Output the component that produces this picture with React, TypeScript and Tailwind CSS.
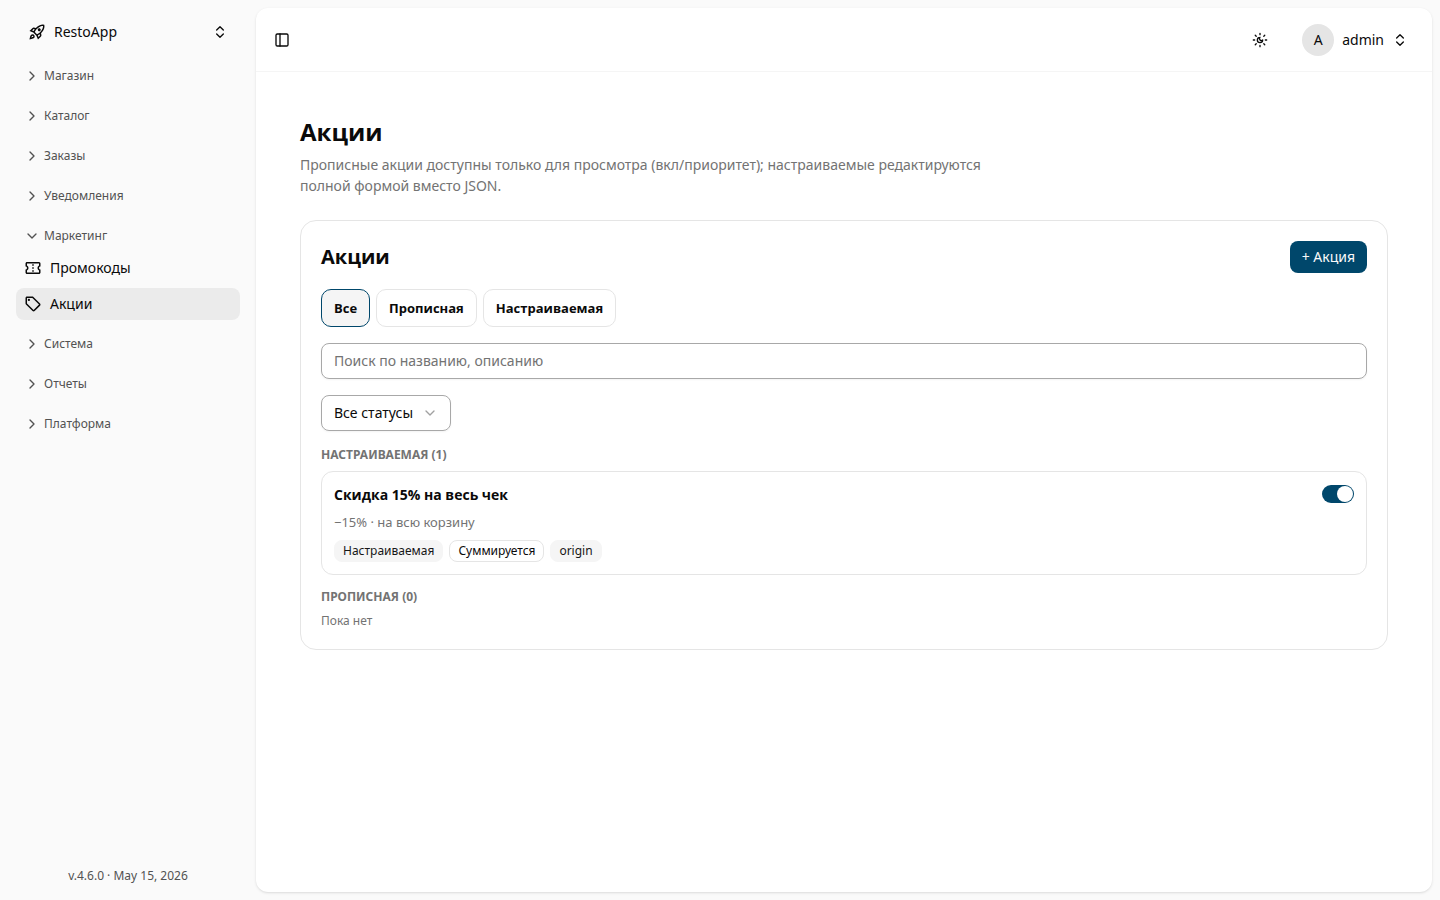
import { useState } from "react";
import { ChevronDown, ChevronRight, ChevronsUpDown, PanelLeft } from "lucide-react";
import type { IconType } from "react-icons";
import { MdOutlineConfirmationNumber, MdOutlineRocketLaunch, MdOutlineSell } from "react-icons/md";

type NavItem = { title: string; icon: IconType };
type NavGroup = { title: string; items?: NavItem[] };

const NAV_GROUPS: NavGroup[] = [
  { title: "Магазин" },
  { title: "Каталог" },
  { title: "Заказы" },
  { title: "Уведомления" },
  {
    title: "Маркетинг",
    items: [
      { title: "Промокоды", icon: MdOutlineConfirmationNumber },
      { title: "Акции", icon: MdOutlineSell },
    ],
  },
  { title: "Система" },
  { title: "Отчеты" },
  { title: "Платформа" },
];

const FILTERS = ["Все", "Прописная", "Настраиваемая"];

export default function App() {
  return (
    <div className="flex min-h-screen bg-[#fafafa] font-['Noto_Sans',sans-serif] text-sm text-neutral-950">
      <Sidebar />
      <main className="my-2 mr-2 flex min-w-0 flex-1 flex-col rounded-xl bg-white shadow-sm">
        <Header />
        <div className="flex flex-col gap-6 px-11 pt-11 pb-6">
          <div>
            <h1 className="font-['Open_Sans',sans-serif] text-2xl leading-8 font-bold">Акции</h1>
            <p className="mt-1.5 max-w-[720px] leading-[21px] text-neutral-500">
              Прописные акции доступны только для просмотра (вкл/приоритет); настраиваемые редактируются полной формой
              вместо JSON.
            </p>
          </div>
          <Promotions />
        </div>
      </main>
    </div>
  );
}

function Sidebar() {
  return (
    <aside className="flex w-64 shrink-0 flex-col justify-between px-4 pt-2 pb-4">
      <div>
        <button className="flex h-12 w-full items-center gap-2 px-3 text-left">
          <MdOutlineRocketLaunch className="size-[18px]" />
          <span className="flex-1">RestoApp</span>
          <ChevronsUpDown className="size-4" />
        </button>
        <nav className="mt-1 flex flex-col gap-2">
          {NAV_GROUPS.map((group) => (
            <NavSection key={group.title} group={group} />
          ))}
        </nav>
      </div>
      <p className="text-center text-xs text-neutral-600">v.4.6.0 · May 15, 2026</p>
    </aside>
  );
}

function NavSection({ group }: { group: NavGroup }) {
  const [open, setOpen] = useState(Boolean(group.items));
  const Chevron = open ? ChevronDown : ChevronRight;

  return (
    <div>
      <button
        onClick={() => setOpen(!open)}
        aria-expanded={open}
        className="flex h-8 w-full items-center gap-1 px-2 text-xs text-neutral-600"
      >
        <Chevron className="size-4" />
        {group.title}
      </button>
      {open && group.items && (
        <ul className="flex flex-col gap-1">
          {group.items.map(({ title, icon: Icon }) => (
            <li key={title}>
              <a
                href="#"
                className={`flex h-8 items-center gap-2 rounded-lg px-2 ${title === "Акции" ? "bg-[#ebebeb]" : ""}`}
              >
                <Icon className="size-[18px]" />
                {title}
              </a>
            </li>
          ))}
        </ul>
      )}
    </div>
  );
}

function Header() {
  return (
    <header className="flex h-16 items-center justify-between border-b border-neutral-100 px-3">
      <button aria-label="Меню" className="flex size-7 items-center justify-center">
        <PanelLeft className="size-4" />
      </button>
      <div className="flex items-center gap-4">
        <button aria-label="Тема" className="flex size-9 items-center justify-center">
          <SunMoonIcon />
        </button>
        <button className="flex h-12 items-center gap-2 px-2 pr-3">
          <span className="flex size-8 items-center justify-center rounded-full bg-[#e5e5e5]">A</span>
          admin
          <ChevronsUpDown className="size-4" />
        </button>
      </div>
    </header>
  );
}

function SunMoonIcon() {
  return (
    <svg
      viewBox="0 0 24 24"
      fill="none"
      stroke="currentColor"
      strokeWidth="2"
      strokeLinecap="round"
      strokeLinejoin="round"
      className="size-4"
    >
      <path d="M12 8a2.83 2.83 0 0 0 4 4 4 4 0 1 1-4-4" />
      <path d="M12 2v2M12 20v2M2 12h2M20 12h2" />
      <path d="m4.9 4.9 1.4 1.4M17.7 17.7l1.4 1.4M6.3 17.7l-1.4 1.4M19.1 4.9l-1.4 1.4" />
    </svg>
  );
}

function Promotions() {
  const [filter, setFilter] = useState("Все");
  const [query, setQuery] = useState("");

  return (
    <section className="flex flex-col gap-4 rounded-2xl border border-neutral-200 p-5">
      <div className="flex items-center justify-between">
        <h2 className="font-['Open_Sans',sans-serif] text-xl leading-8 font-bold">Акции</h2>
        <button className="h-8 rounded-lg bg-[#00476b] px-3 text-neutral-50">+ Акция</button>
      </div>

      <div className="flex flex-wrap gap-1.5">
        {FILTERS.map((name) => (
          <button
            key={name}
            onClick={() => setFilter(name)}
            className={`h-[38px] rounded-[10px] border px-3 font-['Open_Sans',sans-serif] text-[13px] leading-5 font-bold ${
              filter === name ? "border-[#00476b] bg-neutral-100" : "border-neutral-200 bg-white"
            }`}
          >
            {name}
          </button>
        ))}
      </div>

      <input
        type="text"
        aria-label="Поиск"
        value={query}
        onChange={(e) => setQuery(e.target.value)}
        placeholder="Поиск по названию, описанию"
        className="h-9 w-full rounded-lg border border-[#a8a8a8] px-3 pb-0.5 shadow-xs placeholder:text-neutral-500"
      />

      <div className="grid w-[130px] items-center">
        <select
          aria-label="Статус"
          className="col-start-1 row-start-1 h-9 appearance-none rounded-lg border border-[#a8a8a8] px-3 shadow-xs"
        >
          <option>Все статусы</option>
          <option>Активные</option>
          <option>Выключенные</option>
        </select>
        <ChevronDown className="pointer-events-none col-start-1 row-start-1 mr-[13px] size-4 justify-self-end text-neutral-400" />
      </div>

      <div className="flex flex-col gap-3.5">
        <div className="flex flex-col gap-2">
          <h3 className="text-xs font-bold text-neutral-500 uppercase">Настраиваемая (1)</h3>
          <PromotionCard />
        </div>
        <div className="flex flex-col gap-2">
          <h3 className="text-xs font-bold text-neutral-500 uppercase">Прописная (0)</h3>
          <p className="text-xs text-neutral-500">Пока нет</p>
        </div>
      </div>
    </section>
  );
}

function PromotionCard() {
  const [enabled, setEnabled] = useState(true);

  return (
    <article className="flex items-start justify-between rounded-xl border border-neutral-200 p-3">
      <div className="flex flex-col gap-2">
        <h4 className="font-['Open_Sans',sans-serif] leading-[21px] font-bold">Скидка 15% на весь чек</h4>
        <p className="text-[13px] leading-[19px] text-neutral-500">−15% · на всю корзину</p>
        <div className="flex flex-wrap gap-1.5 text-xs">
          <span className="rounded-lg border border-neutral-100 bg-neutral-100 px-2 py-0.5 text-neutral-900">
            Настраиваемая
          </span>
          <span className="rounded-lg border border-neutral-200 px-2 py-0.5">Суммируется</span>
          <span className="rounded-lg border border-neutral-100 bg-neutral-100 px-2 py-0.5 text-neutral-900">
            origin
          </span>
        </div>
      </div>
      <button
        role="switch"
        aria-checked={enabled}
        aria-label="Скидка 15% на весь чек"
        onClick={() => setEnabled(!enabled)}
        className={`mt-px flex h-[18px] w-8 items-center rounded-full border border-transparent ${
          enabled ? "justify-end bg-[#00476b]" : "justify-start bg-neutral-300"
        }`}
      >
        <span className="size-4 rounded-full bg-white" />
      </button>
    </article>
  );
}
